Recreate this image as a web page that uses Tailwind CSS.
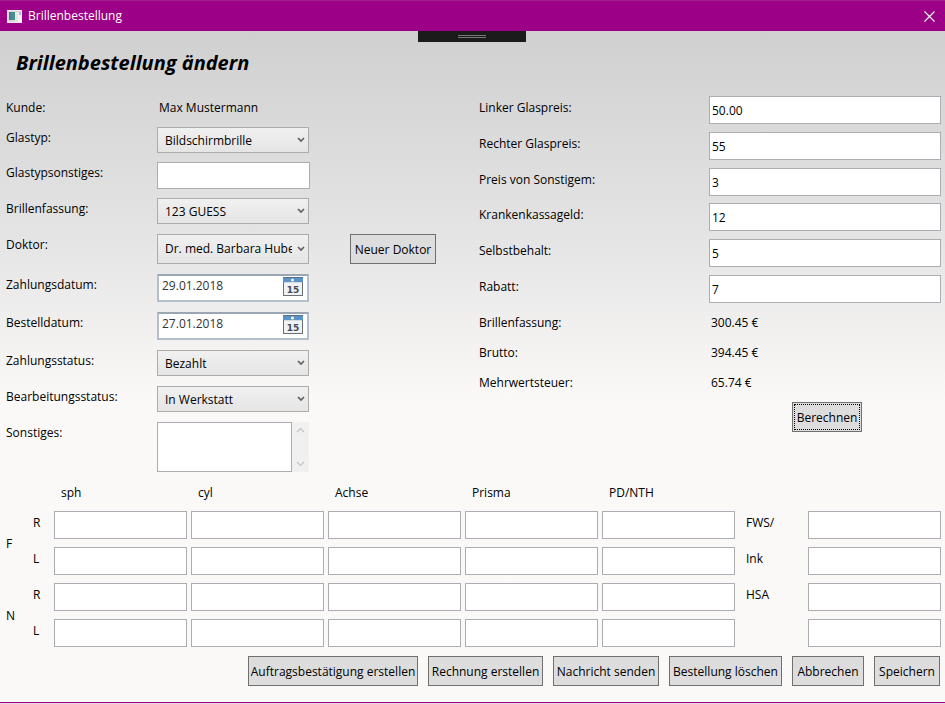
<!DOCTYPE html>
<html lang="de">
<head>
<meta charset="utf-8">
<meta name="viewport" content="width=device-width, initial-scale=1">
<title>Brillenbestellung</title>
<script src="https://cdn.jsdelivr.net/npm/@tailwindcss/browser@4"></script>
</head>
<body class="flex min-h-screen flex-col bg-[#faf9f8] font-['Open_Sans','Noto_Sans',sans-serif] text-[12px] leading-4 text-black">

<svg class="hidden" aria-hidden="true">
  <symbol id="chevron" viewBox="0 0 8 6"><path d="M1 1l3 3 3-3" fill="none" stroke="#606060" stroke-width="1.7"/></symbol>
  <symbol id="calendar" viewBox="0 0 20 19">
    <rect x=".5" y=".5" width="19" height="18" fill="#f1f2f4" stroke="#6b7078"/>
    <rect x="1" y="5" width="18" height="1" fill="#d5dbe2"/>
    <rect x="0" y="0" width="20" height="5" fill="#5a93c8"/>
    <rect x="0" y="0" width="20" height="1" fill="#5b6e82"/>
    <circle cx="9.500" cy="3" r="1.500" fill="#fff"/>
    <text x="10" y="15.500" text-anchor="middle" font-family="DejaVu Sans, sans-serif" font-size="9" font-weight="bold" fill="#444a52">15</text>
  </symbol>
</svg>

<header class="flex h-[31px] items-center border-t border-[#a01f93] bg-[#9b0087] pr-2 pl-[7px] text-white">
  <svg class="h-[13px] w-[15px]" viewBox="0 0 15 13" aria-hidden="true">
    <rect width="15" height="13" fill="#d9d9dc"/>
    <rect x="2" y="2" width="6" height="8" fill="#4a9088"/>
    <rect x="2" y="2" width="2" height="8" fill="#467c94"/>
    <rect x="8" y="2" width="3" height="10" fill="#e9e6e4"/>
    <rect x="11" y="2" width="3" height="10" fill="#f6f6f6"/>
    <rect x="12" y="2" width="2" height="3" fill="#9fc0dc"/>
    <path d="M.5.5h14v12H.5z" fill="none" stroke="#ececee"/>
  </svg>
  <span class="ml-1.5 flex-1">Brillenbestellung</span>
  <button class="p-0.5" aria-label="Schließen">
    <svg class="size-[11px]" viewBox="0 0 11 11" aria-hidden="true"><path d="M.5.5l10 10M10.500.5l-10 10" stroke="#fff" stroke-width="1.100"/></svg>
  </button>
</header>

<main class="relative flex-1 bg-linear-to-b from-[#d0d0d0] from-0% via-[#e5e4e4] via-30% to-[#faf9f8] to-55% pt-4">
  <div class="absolute top-0 left-[418px] flex h-[11px] w-[108px] flex-col items-center justify-center gap-px bg-[#1b1b1b]">
    <div class="h-px w-7 bg-[#777]"></div>
    <div class="h-px w-7 bg-[#777]"></div>
  </div>

  <h1 class="mb-4 pl-4 text-[20px] leading-8 font-bold italic">Brillenbestellung ändern</h1>

  <form>
    <div class="grid grid-cols-[473px_1fr] pr-1 pl-1.5">
      <div>
        <div class="flex h-[30px]"><span class="w-[153px] leading-[26px]">Kunde:</span><span class="leading-[26px]">Max Mustermann</span></div>

        <div class="flex items-start pb-[7px]">
          <label for="glastyp" class="w-[151px] leading-[26px]">Glastyp:</label>
          <div class="relative mt-0.5 w-[152px]">
            <select id="glastyp" class="block h-[26px] w-full appearance-none border border-[#acacac] bg-linear-to-b from-[#f0f0f0] to-[#e5e5e5] pt-0.5 pr-5 pl-[7px]"><option>Bildschirmbrille</option></select>
            <svg class="pointer-events-none absolute top-2.5 right-1 h-1.5 w-2" aria-hidden="true"><use href="#chevron"/></svg>
          </div>
        </div>

        <div class="flex items-start pb-[7px]">
          <label for="glastypsonstiges" class="w-[151px] leading-[26px]">Glastypsonstiges:</label>
          <input id="glastypsonstiges" class="mt-0.5 h-[27px] w-[153px] border border-[#abadb3] bg-white px-0.5">
        </div>

        <div class="flex items-start pb-2">
          <label for="fassung" class="w-[151px] leading-[26px]">Brillenfassung:</label>
          <div class="relative mt-0.5 w-[152px]">
            <select id="fassung" class="block h-[26px] w-full appearance-none border border-[#acacac] bg-linear-to-b from-[#f0f0f0] to-[#e5e5e5] pt-0.5 pr-5 pl-[7px]"><option>123 GUESS</option></select>
            <svg class="pointer-events-none absolute top-2.5 right-1 h-1.5 w-2" aria-hidden="true"><use href="#chevron"/></svg>
          </div>
        </div>

        <div class="flex items-start pb-2">
          <label for="doktor" class="w-[151px] leading-[26px]">Doktor:</label>
          <div class="relative mt-0.5 w-[152px]">
            <select id="doktor" class="block h-[30px] w-full appearance-none border border-[#acacac] bg-linear-to-b from-[#f0f0f0] to-[#e5e5e5] pr-4 pl-[7px]"><option>Dr. med. Barbara Hube</option></select>
            <svg class="pointer-events-none absolute top-3 right-1 h-1.5 w-2" aria-hidden="true"><use href="#chevron"/></svg>
          </div>
          <button type="button" class="mt-0.5 ml-[41px] h-[30px] w-[86px] border border-[#707070] bg-[#ddd] pt-0.5 whitespace-nowrap">Neuer Doktor</button>
        </div>

        <div class="flex items-start pb-2">
          <label for="zahlungsdatum" class="w-[151px] leading-[26px]">Zahlungsdatum:</label>
          <div class="mt-0.5 flex h-7 w-[152px] items-start border-2 border-[#b4bfcd] border-t-[#9aa6b4] bg-white">
            <input id="zahlungsdatum" value="29.01.2018" class="h-[18px] min-w-0 flex-1 pl-[3px] text-[#333]">
            <button type="button" class="mt-px mr-1" aria-label="Kalender öffnen"><svg class="block h-[19px] w-5" aria-hidden="true"><use href="#calendar"/></svg></button>
          </div>
        </div>

        <div class="flex items-start pb-2">
          <label for="bestelldatum" class="w-[151px] leading-[26px]">Bestelldatum:</label>
          <div class="mt-0.5 flex h-7 w-[152px] items-start border-2 border-[#b4bfcd] border-t-[#9aa6b4] bg-white">
            <input id="bestelldatum" value="27.01.2018" class="h-[18px] min-w-0 flex-1 pl-[3px] text-[#333]">
            <button type="button" class="mt-px mr-1" aria-label="Kalender öffnen"><svg class="block h-[19px] w-5" aria-hidden="true"><use href="#calendar"/></svg></button>
          </div>
        </div>

        <div class="flex items-start pb-2">
          <label for="zahlungsstatus" class="w-[151px] leading-[26px]">Zahlungsstatus:</label>
          <div class="relative mt-0.5 w-[152px]">
            <select id="zahlungsstatus" class="block h-[26px] w-full appearance-none border border-[#acacac] bg-linear-to-b from-[#f0f0f0] to-[#e5e5e5] pt-0.5 pr-5 pl-[7px]"><option>Bezahlt</option></select>
            <svg class="pointer-events-none absolute top-2.5 right-1 h-1.5 w-2" aria-hidden="true"><use href="#chevron"/></svg>
          </div>
        </div>

        <div class="flex items-start pb-2">
          <label for="bearbeitungsstatus" class="w-[151px] leading-[26px]">Bearbeitungsstatus:</label>
          <div class="relative mt-0.5 w-[152px]">
            <select id="bearbeitungsstatus" class="block h-[26px] w-full appearance-none border border-[#acacac] bg-linear-to-b from-[#f0f0f0] to-[#e5e5e5] pt-0.5 pr-5 pl-[7px]"><option>In Werkstatt</option></select>
            <svg class="pointer-events-none absolute top-2.5 right-1 h-1.5 w-2" aria-hidden="true"><use href="#chevron"/></svg>
          </div>
        </div>

        <div class="flex items-start pb-2">
          <label for="sonstiges" class="w-[151px] leading-[26px]">Sonstiges:</label>
          <div class="mt-0.5 flex h-[50px] w-[152px]">
            <textarea id="sonstiges" class="w-[135px] resize-none border border-[#abadb3] bg-white px-0.5"></textarea>
            <div class="flex flex-1 flex-col items-center justify-between bg-[#f0f0f0] py-[5px]">
              <svg class="h-[6px] w-[9px]" viewBox="0 0 9 6" aria-hidden="true"><path d="M1 5l3.500-3.500L8 5" fill="none" stroke="#c4c4c4" stroke-width="1.200"/></svg>
              <svg class="h-[6px] w-[9px]" viewBox="0 0 9 6" aria-hidden="true"><path d="M1 1l3.500 3.500L8 1" fill="none" stroke="#c4c4c4" stroke-width="1.200"/></svg>
            </div>
          </div>
        </div>
      </div>

      <div>
        <div class="flex h-9 items-start"><label for="links" class="w-[230px] leading-[26px]">Linker Glaspreis:</label><input id="links" value="50.00" class="mt-px h-7 min-w-0 flex-1 border border-[#abadb3] bg-white px-0.5"></div>
        <div class="flex h-9 items-start"><label for="rechts" class="w-[230px] leading-[26px]">Rechter Glaspreis:</label><input id="rechts" value="55" class="mt-px h-7 min-w-0 flex-1 border border-[#abadb3] bg-white px-0.5"></div>
        <div class="flex h-[35px] items-start"><label for="sonstpreis" class="w-[230px] leading-[26px]">Preis von Sonstigem:</label><input id="sonstpreis" value="3" class="mt-px h-7 min-w-0 flex-1 border border-[#abadb3] bg-white px-0.5"></div>
        <div class="flex h-9 items-start"><label for="kasse" class="w-[230px] leading-[26px]">Krankenkassageld:</label><input id="kasse" value="12" class="mt-px h-7 min-w-0 flex-1 border border-[#abadb3] bg-white px-0.5"></div>
        <div class="flex h-9 items-start"><label for="selbst" class="w-[230px] leading-[26px]">Selbstbehalt:</label><input id="selbst" value="5" class="mt-px h-7 min-w-0 flex-1 border border-[#abadb3] bg-white px-0.5"></div>
        <div class="flex h-9 items-start"><label for="rabatt" class="w-[230px] leading-[26px]">Rabatt:</label><input id="rabatt" value="7" class="mt-px h-7 min-w-0 flex-1 border border-[#abadb3] bg-white px-0.5"></div>
        <div class="flex h-[30px] leading-[26px]"><span class="w-[232px]">Brillenfassung:</span><span>300.45 €</span></div>
        <div class="flex h-[30px] leading-[26px]"><span class="w-[232px]">Brutto:</span><span>394.45 €</span></div>
        <div class="flex h-[30px] leading-[26px]"><span class="w-[232px]">Mehrwertsteuer:</span><span>65.74 €</span></div>
        <div class="flex justify-center pt-0.5 pl-[234px]">
          <button type="button" class="h-[30px] w-[70px] border border-[#707070] bg-[#ddd] p-px"><span class="flex h-full items-center justify-center border border-dotted border-black pt-0.5">Berechnen</span></button>
        </div>
      </div>
    </div>

    <div class="pr-0.5">
      <table class="w-full table-fixed border-collapse text-left">
        <colgroup><col class="w-[27px]"><col class="w-[25px]"><col><col><col><col><col><col class="w-[69px]"><col></colgroup>
        <thead>
          <tr class="h-[30px] align-top leading-[26px]">
            <td></td><td></td>
            <th scope="col" class="pl-[9px] font-normal">sph</th>
            <th scope="col" class="pl-[9px] font-normal">cyl</th>
            <th scope="col" class="pl-[9px] font-normal">Achse</th>
            <th scope="col" class="pl-[9px] font-normal">Prisma</th>
            <th scope="col" class="pl-[9px] font-normal">PD/NTH</th>
            <td></td><td></td>
          </tr>
        </thead>
        <tbody>
          <tr class="h-9 align-top">
            <th scope="rowgroup" rowspan="2" class="pb-1 pl-1.5 align-middle font-normal">F</th>
            <th scope="row" class="pl-1.5 leading-[26px] font-normal">R</th>
            <td class="px-0.5 pt-px"><input aria-label="F R sph" class="block h-7 w-full border border-[#abadb3] bg-white px-0.5"></td>
            <td class="px-0.5 pt-px"><input aria-label="F R cyl" class="block h-7 w-full border border-[#abadb3] bg-white px-0.5"></td>
            <td class="px-0.5 pt-px"><input aria-label="F R Achse" class="block h-7 w-full border border-[#abadb3] bg-white px-0.5"></td>
            <td class="px-0.5 pt-px"><input aria-label="F R Prisma" class="block h-7 w-full border border-[#abadb3] bg-white px-0.5"></td>
            <td class="px-0.5 pt-px"><input aria-label="F R PD/NTH" class="block h-7 w-full border border-[#abadb3] bg-white px-0.5"></td>
            <td class="pl-[9px] leading-[26px]"><label for="fws">FWS/</label></td>
            <td class="px-0.5 pt-px"><input id="fws" class="block h-7 w-full border border-[#abadb3] bg-white px-0.5"></td>
          </tr>
          <tr class="h-9 align-top">
            <th scope="row" class="pl-1.5 leading-[26px] font-normal">L</th>
            <td class="px-0.5 pt-px"><input aria-label="F L sph" class="block h-7 w-full border border-[#abadb3] bg-white px-0.5"></td>
            <td class="px-0.5 pt-px"><input aria-label="F L cyl" class="block h-7 w-full border border-[#abadb3] bg-white px-0.5"></td>
            <td class="px-0.5 pt-px"><input aria-label="F L Achse" class="block h-7 w-full border border-[#abadb3] bg-white px-0.5"></td>
            <td class="px-0.5 pt-px"><input aria-label="F L Prisma" class="block h-7 w-full border border-[#abadb3] bg-white px-0.5"></td>
            <td class="px-0.5 pt-px"><input aria-label="F L PD/NTH" class="block h-7 w-full border border-[#abadb3] bg-white px-0.5"></td>
            <td class="pl-[9px] leading-[26px]"><label for="ink">Ink</label></td>
            <td class="px-0.5 pt-px"><input id="ink" class="block h-7 w-full border border-[#abadb3] bg-white px-0.5"></td>
          </tr>
        </tbody>
        <tbody>
          <tr class="h-9 align-top">
            <th scope="rowgroup" rowspan="2" class="pb-1 pl-1.5 align-middle font-normal">N</th>
            <th scope="row" class="pl-1.5 leading-[26px] font-normal">R</th>
            <td class="px-0.5 pt-px"><input aria-label="N R sph" class="block h-7 w-full border border-[#abadb3] bg-white px-0.5"></td>
            <td class="px-0.5 pt-px"><input aria-label="N R cyl" class="block h-7 w-full border border-[#abadb3] bg-white px-0.5"></td>
            <td class="px-0.5 pt-px"><input aria-label="N R Achse" class="block h-7 w-full border border-[#abadb3] bg-white px-0.5"></td>
            <td class="px-0.5 pt-px"><input aria-label="N R Prisma" class="block h-7 w-full border border-[#abadb3] bg-white px-0.5"></td>
            <td class="px-0.5 pt-px"><input aria-label="N R PD/NTH" class="block h-7 w-full border border-[#abadb3] bg-white px-0.5"></td>
            <td class="pl-[9px] leading-[26px]"><label for="hsa">HSA</label></td>
            <td class="px-0.5 pt-px"><input id="hsa" class="block h-7 w-full border border-[#abadb3] bg-white px-0.5"></td>
          </tr>
          <tr class="h-9 align-top">
            <th scope="row" class="pl-1.5 leading-[26px] font-normal">L</th>
            <td class="px-0.5 pt-px"><input aria-label="N L sph" class="block h-7 w-full border border-[#abadb3] bg-white px-0.5"></td>
            <td class="px-0.5 pt-px"><input aria-label="N L cyl" class="block h-7 w-full border border-[#abadb3] bg-white px-0.5"></td>
            <td class="px-0.5 pt-px"><input aria-label="N L Achse" class="block h-7 w-full border border-[#abadb3] bg-white px-0.5"></td>
            <td class="px-0.5 pt-px"><input aria-label="N L Prisma" class="block h-7 w-full border border-[#abadb3] bg-white px-0.5"></td>
            <td class="px-0.5 pt-px"><input aria-label="N L PD/NTH" class="block h-7 w-full border border-[#abadb3] bg-white px-0.5"></td>
            <td></td>
            <td class="px-0.5 pt-px"><input aria-label="Zusatzwert" class="block h-7 w-full border border-[#abadb3] bg-white px-0.5"></td>
          </tr>
        </tbody>
      </table>
    </div>

    <div class="flex justify-end gap-2.5 pt-0.5 pr-[5px] whitespace-nowrap">
      <button type="button" class="h-[30px] w-[170px] border border-[#707070] bg-[#ddd] pt-0.5">Auftragsbestätigung erstellen</button>
      <button type="button" class="h-[30px] w-[115px] border border-[#707070] bg-[#ddd] pt-0.5">Rechnung erstellen</button>
      <button type="button" class="h-[30px] w-[106px] border border-[#707070] bg-[#ddd] pt-0.5">Nachricht senden</button>
      <button type="button" class="h-[30px] w-[113px] border border-[#707070] bg-[#ddd] pt-0.5">Bestellung löschen</button>
      <button type="button" class="h-[30px] w-[72px] border border-[#707070] bg-[#ddd] pt-0.5">Abbrechen</button>
      <button type="button" class="h-[30px] w-[66px] border border-[#707070] bg-[#ddd] pt-0.5">Speichern</button>
    </div>
  </form>
</main>
<footer class="h-0.5 border-t border-[#9b0087] bg-[#e6d5e4]"></footer>
</body>
</html>
